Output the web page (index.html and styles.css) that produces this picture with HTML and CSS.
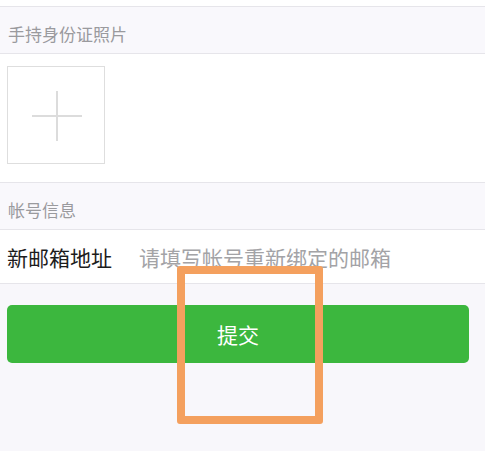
FILE: index.html
```html
<!DOCTYPE html>
<html lang="zh-CN">
<head>
    <meta charset="UTF-8">
    <meta name="viewport" content="width=device-width, initial-scale=1.0">
    <title>帐号申诉</title>
    <link rel="stylesheet" href="styles.css">
</head>
<body>

    <div class="top-strip"></div>

    <!-- 手持身份证照片 -->
    <div class="section-title">手持身份证照片</div>
    <div class="upload-area">
        <div class="upload-box">
            <span class="plus-h"></span>
            <span class="plus-v"></span>
        </div>
    </div>

    <!-- 帐号信息 -->
    <div class="section-title">帐号信息</div>
    <div class="form-row">
        <label for="email">新邮箱地址</label>
        <input type="text" id="email" placeholder="请填写帐号重新绑定的邮箱">
    </div>

    <div class="actions">
        <button type="submit" class="submit-btn">提交</button>
    </div>

    <!-- 标注框 -->
    <div class="highlight"></div>

</body>
</html>
```

FILE: styles.css
```css
body {
    font-family: "Noto Sans CJK SC", "Noto Sans", sans-serif;
    margin: 0;
    padding: 0;
    background-color: #f8f7fb;
    position: relative;
    height: 451px;
    overflow: hidden;
}

.top-strip {
    height: 6px;
    background-color: #fff;
    border-bottom: 1px solid #e6e5ea;
}

/* Sectietitels */
.section-title {
    height: 38px;
    line-height: 38px;
    padding: 8px 0 0 8px;
    font-size: 17px;
    color: #9a9a9e;
    background-color: #f9f8fc;
    border-bottom: 1px solid #e6e5ea;
}

/* Foto upload */
.upload-area {
    background-color: #fff;
    padding: 12px 7px 18px;
    border-bottom: 1px solid #e6e5ea;
}

.upload-box {
    position: relative;
    width: 96px;
    height: 96px;
    border: 1px solid #dedede;
}

.plus-h {
    position: absolute;
    left: 24px;
    top: 48px;
    width: 50px;
    height: 2px;
    background-color: #dcdcdc;
}

.plus-v {
    position: absolute;
    left: 48px;
    top: 24px;
    width: 2px;
    height: 50px;
    background-color: #dcdcdc;
}

/* Formulier rij */
.form-row {
    display: flex;
    align-items: center;
    height: 53px;
    padding-left: 7px;
    background-color: #fff;
    border-bottom: 1px solid #e6e5ea;
}

.form-row label {
    font-size: 21px;
    color: #1c1c1c;
    width: 132px;
}

.form-row input {
    flex: 1;
    min-width: 0;
    border: none;
    outline: none;
    font-family: inherit;
    font-size: 21px;
    padding: 0;
    background: transparent;
}

.form-row input::placeholder {
    color: #a3a3a6;
}

/* Knop */
.actions {
    padding: 21px 16px 0 7px;
}

.submit-btn {
    display: block;
    width: 100%;
    height: 58px;
    border: none;
    border-radius: 5px;
    background-color: #3cb73e;
    color: #fff;
    font-family: inherit;
    font-size: 21px;
    cursor: pointer;
}

/* Oranje markering */
.highlight {
    position: absolute;
    left: 177px;
    top: 266px;
    width: 130px;
    height: 142px;
    border: 8px solid #f4a05e;
    border-radius: 3px;
}
```
